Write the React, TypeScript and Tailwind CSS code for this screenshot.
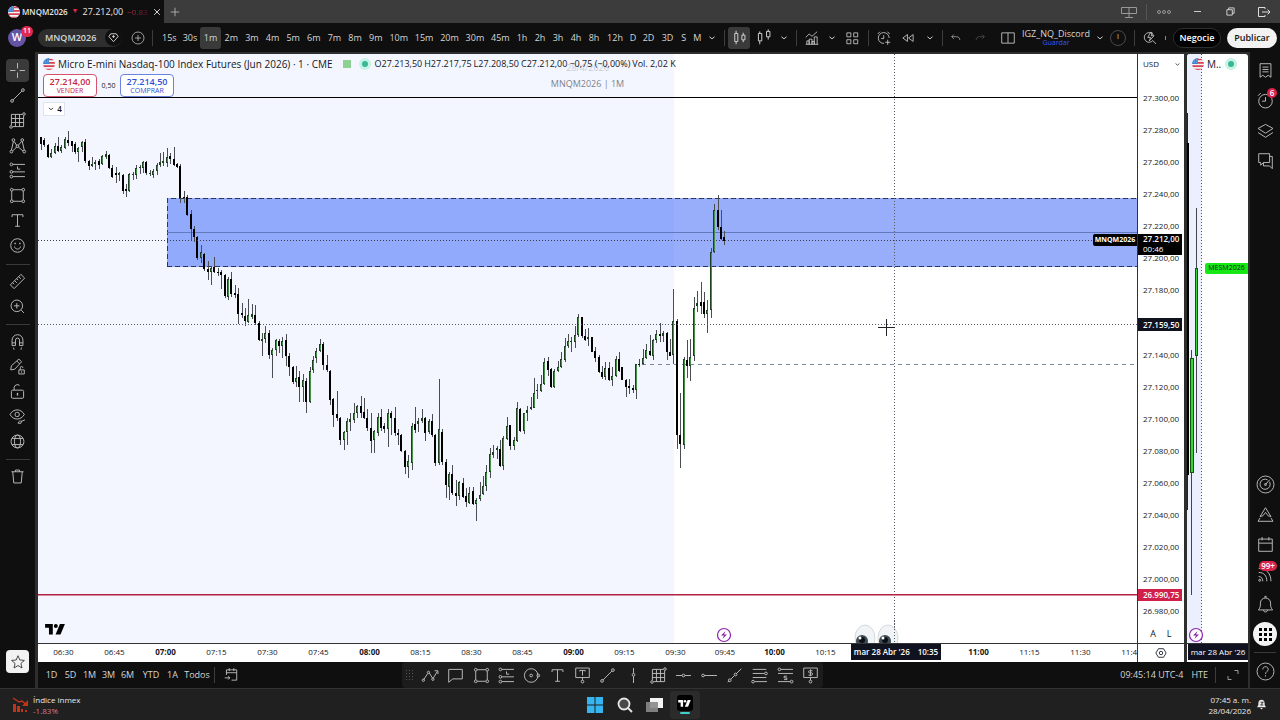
import { useState } from "react";
import type { ReactNode } from "react";

// [high, open, close, low] as y levels on the chart canvas, one bar per minute
type Bar = [number, number, number, number];

const FIRST_BAR_X = 41;
const BAR_STEP = 3.4;

const bars: Bar[] = [
  [137, 137, 144, 150], [138, 140, 145, 147], [144, 145, 157, 158], [149, 157, 153, 158],
  [143, 153, 146, 154], [137, 146, 151, 152], [145, 151, 147, 153], [137, 148, 139, 149],
  [131, 140, 143, 146], [141, 141, 146, 152], [142, 144, 152, 154], [147, 152, 148, 162],
  [141, 147, 142, 152], [139, 142, 161, 163], [160, 161, 166, 170], [157, 166, 164, 167],
  [160, 164, 162, 170], [159, 161, 165, 169], [155, 164, 156, 165], [151, 157, 154, 159],
  [154, 155, 168, 169], [165, 168, 177, 178], [167, 173, 175, 183], [172, 175, 173, 181],
  [174, 175, 191, 194], [184, 189, 191, 197], [173, 191, 174, 192], [172, 175, 174, 180],
  [165, 175, 168, 179], [165, 168, 167, 174], [161, 168, 162, 173], [161, 162, 173, 175],
  [170, 174, 173, 176], [169, 175, 171, 178], [163, 171, 165, 175], [153, 165, 162, 167],
  [152, 163, 161, 166], [148, 163, 157, 167], [153, 156, 159, 164], [147, 159, 165, 166],
  [163, 164, 167, 168], [164, 166, 198, 203], [191, 197, 198, 203], [195, 197, 215, 216],
  [210, 214, 229, 241], [226, 229, 237, 242], [236, 237, 258, 260], [245, 258, 252, 263],
  [253, 254, 269, 271], [261, 269, 272, 280], [266, 272, 268, 285], [257, 267, 272, 273],
  [268, 272, 273, 276], [270, 272, 275, 289], [274, 275, 296, 298], [277, 297, 279, 300],
  [272, 279, 294, 297], [285, 293, 295, 298], [288, 294, 314, 324], [303, 313, 315, 318],
  [308, 316, 321, 326], [299, 322, 315, 323], [304, 317, 314, 319], [305, 315, 323, 325],
  [321, 323, 340, 341], [333, 341, 339, 356], [326, 339, 333, 343], [330, 333, 355, 359],
  [348, 355, 350, 378], [339, 350, 340, 356], [339, 341, 346, 353], [337, 346, 341, 358],
  [334, 340, 356, 366], [353, 356, 367, 376], [366, 367, 382, 384], [366, 382, 378, 387],
  [371, 377, 387, 402], [374, 387, 380, 402], [378, 381, 402, 413], [367, 402, 371, 403],
  [356, 370, 360, 373], [348, 358, 351, 363], [339, 351, 344, 352], [342, 344, 365, 370],
  [355, 365, 370, 372], [370, 371, 400, 405], [398, 399, 415, 427], [391, 414, 418, 421],
  [417, 418, 440, 445], [431, 440, 432, 450], [418, 432, 421, 445], [413, 422, 419, 431],
  [403, 420, 413, 423], [405, 413, 406, 418], [396, 406, 413, 418], [398, 412, 418, 419],
  [409, 418, 428, 431], [413, 428, 441, 453], [430, 440, 431, 453], [413, 433, 417, 436],
  [409, 417, 428, 431], [423, 426, 429, 433], [409, 429, 413, 447], [411, 413, 418, 435],
  [407, 418, 433, 436], [429, 433, 435, 445], [434, 435, 451, 452], [450, 451, 467, 474],
  [455, 467, 461, 478], [423, 463, 426, 470], [407, 424, 430, 433], [418, 424, 421, 432],
  [409, 421, 418, 423], [417, 418, 433, 441], [419, 432, 421, 434], [414, 421, 435, 437],
  [434, 435, 463, 466], [379, 463, 429, 465], [429, 432, 462, 465], [459, 462, 485, 498],
  [472, 487, 474, 500], [465, 474, 493, 495], [480, 493, 496, 506], [481, 496, 482, 500],
  [478, 483, 497, 498], [488, 496, 502, 507], [487, 503, 493, 504], [487, 491, 504, 505],
  [498, 504, 500, 521], [482, 499, 495, 501], [476, 494, 486, 495], [465, 486, 472, 491],
  [448, 472, 454, 478], [445, 455, 452, 458], [446, 450, 448, 459], [440, 449, 466, 467],
  [436, 466, 438, 470], [417, 439, 426, 440], [425, 425, 446, 450], [437, 446, 440, 450],
  [402, 441, 408, 442], [408, 409, 431, 432], [413, 431, 413, 434], [406, 413, 410, 421],
  [397, 409, 407, 410], [378, 408, 393, 408], [384, 391, 390, 399], [375, 391, 384, 392],
  [358, 384, 362, 385], [357, 361, 370, 376], [368, 369, 387, 388], [369, 387, 371, 388],
  [361, 371, 367, 372], [352, 367, 359, 368], [338, 360, 346, 362], [334, 346, 341, 348],
  [337, 342, 341, 352], [326, 342, 335, 348], [314, 335, 317, 337], [317, 317, 336, 338],
  [329, 336, 340, 341], [328, 339, 337, 346], [337, 337, 352, 352], [347, 351, 358, 362],
  [355, 357, 372, 373], [366, 372, 377, 379], [362, 377, 368, 380], [362, 368, 380, 381],
  [367, 380, 376, 386], [356, 376, 359, 377], [352, 359, 371, 372], [367, 367, 380, 380],
  [379, 380, 387, 397], [379, 386, 388, 394], [385, 388, 390, 393], [364, 390, 364, 399],
  [359, 364, 365, 367], [349, 364, 358, 365], [344, 358, 350, 359], [335, 351, 355, 356],
  [339, 356, 340, 360], [330, 340, 334, 343], [323, 334, 336, 342], [331, 336, 333, 342],
  [332, 333, 352, 360], [339, 352, 356, 356], [289, 355, 321, 364], [319, 321, 435, 449],
  [393, 435, 444, 468], [357, 445, 359, 449], [340, 360, 366, 378], [339, 366, 357, 381],
  [297, 356, 308, 361], [291, 306, 303, 312], [282, 302, 306, 314], [292, 302, 314, 318],
  [300, 314, 310, 333], [248, 310, 252, 318], [204, 252, 210, 253], [195, 210, 227, 230],
  [210, 227, 239, 240], [231, 237, 241, 245],
];

// the empty row is the one that the crosshair price covers
const prices = [
  "27.300,00", "27.280,00", "27.260,00", "27.240,00", "27.220,00", "27.200,00",
  "27.180,00", "", "27.140,00", "27.120,00", "27.100,00", "27.080,00",
  "27.060,00", "27.040,00", "27.020,00", "27.000,00", "26.980,00",
];

const timesBefore = [
  "06:30", "06:45", "07:00", "07:15", "07:30", "07:45", "08:00", "08:15", "08:30",
  "08:45", "09:00", "09:15", "09:30", "09:45", "10:00", "10:15",
];
const timesAfter = ["11:00", "11:15", "11:30", "11:45"];

const intervalGroups = [
  { width: "w-[227px]", items: ["15s", "30s", "1m", "2m", "3m", "4m", "5m", "6m", "7m", "8m", "9m"] },
  { width: "w-[127px]", items: ["10m", "15m", "20m", "30m", "45m"] },
  { width: "w-[90px]", items: ["1h", "2h", "3h", "4h", "8h"] },
  { width: "w-6", items: ["12h"] },
  { width: "w-3", items: ["D"] },
  { width: "w-[38px]", items: ["2D", "3D"] },
  { width: "w-[27px]", items: ["S", "M"] },
];

const ranges = [
  { label: "1D", width: "w-[19px]" },
  { label: "5D", width: "w-[19px]" },
  { label: "1M", width: "w-[19px]" },
  { label: "3M", width: "w-[19px]" },
  { label: "6M", width: "w-[19px]" },
  { label: "YTD", width: "w-7" },
  { label: "1A", width: "w-[15px]" },
  { label: "Todos", width: "w-[34px]" },
];

const Icon = ({ children, className = "size-[19px]" }: { children: ReactNode; className?: string }) => (
  <svg
    viewBox="0 0 28 28"
    className={`shrink-0 ${className}`}
    fill="none"
    stroke="currentColor"
    strokeWidth="1.4"
    aria-hidden="true"
  >
    {children}
  </svg>
);

const icons = {
  cross: <path d="M14 3v8M14 17v8M3 14h8M17 14h8" />,
  trend: (
    <>
      <path d="M7.5 20.5l13-13" />
      <circle cx="6" cy="22" r="2" />
      <circle cx="22" cy="6" r="2" />
    </>
  ),
  gann: (
    <>
      <path d="M5 5h16M5 5v16M7 23h16V7M11 5v18M17 5v18M5 11h18M5 17h18" />
      <circle cx="23.500" cy="4.500" r="1.900" />
      <circle cx="4.500" cy="23.500" r="1.900" />
    </>
  ),
  pattern: (
    <>
      <path d="M5 21L8 8M9 8l4 6M15 14l5-6M21 8l3 13M7 22l6-6M15 16l7 6" />
      <circle cx="8" cy="6" r="2" />
      <circle cx="21" cy="6" r="2" />
      <circle cx="14" cy="15" r="2" />
      <circle cx="5" cy="23" r="2" />
      <circle cx="24" cy="23" r="2" />
    </>
  ),
  position: (
    <>
      <path d="M7 5h18M7 16h18M7 23h18M14 8v4h4" />
      <circle cx="5" cy="5" r="2" />
      <circle cx="5" cy="16" r="2" />
      <circle cx="5" cy="23" r="2" />
    </>
  ),
  priceRange: (
    <>
      <path d="M7 5h18M3 11h22M3 23h18M16 15h-4v2.500h4V20h-4" />
      <circle cx="5" cy="5" r="2" />
      <circle cx="23" cy="23" r="2" />
    </>
  ),
  rect: (
    <>
      <path d="M7.500 5.500h13M7.500 22.500h13M5.500 7.500v13M22.500 7.500v13" />
      <circle cx="5.500" cy="5.500" r="2" />
      <circle cx="22.500" cy="5.500" r="2" />
      <circle cx="5.500" cy="22.500" r="2" />
      <circle cx="22.500" cy="22.500" r="2" />
    </>
  ),
  text: <path d="M6 9V5.500h16V9M14 5.500v17M10.500 22.500h7" />,
  smile: (
    <>
      <circle cx="14" cy="14" r="10" />
      <path d="M9.500 15.500c1 5 8 5 9 0" />
      <path d="M10.500 10v2M17.500 10v2" strokeWidth="2" />
    </>
  ),
  ruler: <path d="M3.500 19L19 3.500l5.500 5.500L9 24.500zM7 16l2 2M10 13l3 3M13 10l2 2M16 7l3 3" />,
  zoom: (
    <>
      <circle cx="13" cy="13" r="8.500" />
      <path d="M19.500 19.500l4 4M13 9v8M9 13h8" />
    </>
  ),
  magnet: <path d="M6 20v-8a8 8 0 0116 0v8h-5v-8a3 3 0 00-6 0v8zM6 16h5M17 16h5M8 23l1 3M20 23l-1 3" />,
  pencilLock: (
    <>
      <path d="M4 19l1-6L16 3l4 4L10 18zM13 6l4 4M16 19h8v6h-8zM18 19v-3a2 2 0 014 0" />
      <path d="M20 21v2" />
    </>
  ),
  lock: (
    <>
      <rect x="5" y="12" width="18" height="12" rx="2" />
      <path d="M9 12V8a5 5 0 018-3" />
      <path d="M14 16v4" strokeWidth="2" />
    </>
  ),
  eye: (
    <>
      <path d="M3 11c5-9 16-9 21 0-5 9-16 9-21 0z" />
      <rect x="10.500" y="8" width="6" height="6" rx="2" />
      <path d="M15 24c0-3 3-4 5-3l-1 3zM20 21l5-2" />
    </>
  ),
  globe: (
    <>
      <circle cx="14" cy="14" r="9.500" />
      <ellipse cx="14" cy="14" rx="4.500" ry="9.500" />
      <path d="M6 9.500h16M6 18.500h16" />
    </>
  ),
  trash: <path d="M5 7h18M11 7V4.500h6V7M7 7l1.500 16.500h11L21 7" />,
  star: <path d="M14 3l3.200 7.500 8 .700-6.100 5.300 1.900 8-7-4.300-7 4.300 1.900-8-6.100-5.300 8-.700z" />,
  candles: <path d="M9 4v4M9 20v4M7 8h4.500v12H7zM19.500 7v3.500M19.500 17.500V21M17.500 10.500H22v7h-4.500z" />,
  candlesAlt: <path d="M7 5v3M7 19v5M5 8h5v11H5zM19.500 2v3M19.500 13v4M17 5h5v8h-5z" />,
  indicators: <path d="M3 13l6-6 5 4 9-8M5 25v-6h4v6M9 25v-9h5v9M14 25v-5h4v5M18 25V12h5v13M3 25h22" />,
  layouts: <path d="M5 5h7v7H5zM17 5h7v7h-7zM5 17h7v7H5zM17 17h7v7h-7z" />,
  alertAdd: <path d="M23 14a9.500 9.500 0 10-9 9.500M13.500 9v6H9M3 7l4-4M20 3l4 4M20.500 17v9M16 21.500h9" />,
  rewind: <path d="M13 8v12l-8-6zM23 8v12l-8-6z" />,
  undo: <path d="M9 6l-5 5 5 5M4 11h11c5 0 8 3 8 8" />,
  redo: <path d="M19 6l5 5-5 5M24 11H13c-5 0-8 3-8 8" />,
  layout: <path d="M3 5h22v18H3zM14 5v18" />,
  chevron: <path d="M8 11l6 5 6-5" strokeWidth="2.200" />,
  flashSearch: <path d="M20 9a8.500 8.500 0 10-1 9.500l5.500 6M15 4l-5 9h5l-2 6 8-9h-5l2-5z" />,
  list: <path d="M6 4h16v20l-4-3-4 3-4-3-4 3zM9.500 9h9M9.500 12.500h9M9.500 16h9" />,
  clock: (
    <>
      <circle cx="14" cy="15" r="10" />
      <path d="M14 9v6h-5M3 7l4-4" />
    </>
  ),
  layers: <path d="M14 5l11 6-11 7-11-7zM3 17l11 7 11-7" />,
  chat: <path d="M4 4h16v13H11l-4 4v-4H4zM20 8h4v18l-4-4h-9v-5" />,
  radar: (
    <>
      <circle cx="14" cy="14" r="12.500" />
      <path d="M20 10a7.500 7.500 0 11-3-3M14 14l6-7" />
      <circle cx="14" cy="14" r="1.500" />
    </>
  ),
  pine: <path d="M6 19l-3 5h22l-3-5M6 17l8-13 8 13-4-1-4-5-4 5z" />,
  calendar: <path d="M4 6h20v18H4zM4 12h20M9 3v5M19 3v5" />,
  feed: (
    <>
      <path d="M4 11c8 0 12 5 12 13M4 5c12 0 18 8 18 19M4 17c4 0 6 3 6 7" />
      <circle cx="5.500" cy="22.500" r="1.500" />
    </>
  ),
  bell: <path d="M3.500 22h21c-3-3-3-6-3-10 0-10-15-10-15 0 0 4 0 7-3 10zM11 22c0 4 6 4 6 0M13 4V2h2v2" />,
  help: (
    <>
      <circle cx="14" cy="14" r="12.500" />
      <path d="M10 11c0-5.500 8-5.500 8 0 0 3-4 3-4 6.500M14 19.500v2" />
    </>
  ),
  goTo: <path d="M6 14V5h18v18h-9M6 10h18M11 2v5M19 2v5M3 19h9M9 16l3 3-3 3" />,
  path: (
    <>
      <path d="M4 20l6-9M12 10l5 8M18 18l6-10M20 7h5v5" />
      <circle cx="3.500" cy="21" r="1.700" />
      <circle cx="11" cy="9.500" r="1.700" />
      <circle cx="17.500" cy="19.500" r="1.700" />
    </>
  ),
  comment: <path d="M4 5h20v14H10l-6 5z" />,
  ellipse: (
    <>
      <circle cx="13.500" cy="14" r="10" />
      <circle cx="13.500" cy="14" r="2" />
      <circle cx="24" cy="14" r="2" />
    </>
  ),
  note: (
    <>
      <path d="M4 3h20v14H4zM10 8V6.500h8V8M14 6.500V14M14 17v4" />
      <circle cx="14" cy="23" r="2" />
    </>
  ),
  vertical: (
    <>
      <path d="M14 3v8M14 15v10" />
      <circle cx="14" cy="13" r="2" />
    </>
  ),
  horizontal: (
    <>
      <path d="M3 14h9M16 14h9" />
      <circle cx="14" cy="14" r="2" />
    </>
  ),
  ray: (
    <>
      <path d="M6 14h19" />
      <circle cx="4.500" cy="14" r="2" />
    </>
  ),
  extended: (
    <>
      <path d="M4 24l2-2M9 19l5-5M16 12l8-8" />
      <circle cx="7" cy="21" r="2" />
      <circle cx="15.500" cy="12.500" r="2" />
    </>
  ),
  fib: (
    <>
      <path d="M4 5h20M4 11h17M4 17h20M7 23h18" />
      <circle cx="23.500" cy="11" r="2" />
      <circle cx="4.500" cy="23" r="2" />
    </>
  ),
  priceNote: (
    <>
      <path d="M4 3h20v14H4zM17 7h-4.500c-2 0-2 3 0 3h3c2 0 2 3.500 0 3.500H11M14 5v10M14 17v4" />
      <circle cx="14" cy="23" r="2" />
    </>
  ),
  expand: <path d="M17 5h7v7M4 16v7h7" />,
  close: <path d="M6 6l16 16M22 6L6 22" strokeWidth="2.600" />,
  plus: <path d="M14 4v20M4 14h20" strokeWidth="2" />,
};

type IconName = keyof typeof icons;

const drawTools: IconName[][] = [
  ["cross", "trend", "gann", "pattern", "position", "rect", "text", "smile"],
  ["ruler", "zoom"],
  ["magnet", "pencilLock", "lock", "eye", "globe"],
];

const favoriteTools: IconName[] = [
  "path", "comment", "rect", "position", "ellipse", "text", "note", "trend", "vertical",
  "gann", "horizontal", "ray", "extended", "fib", "priceRange", "priceNote",
];

const IconButton = ({ name, width, size }: { name: IconName; width: string; size?: string }) => (
  <button type="button" aria-label={name} className={`flex h-full items-center justify-center ${width}`}>
    <Icon className={size}>{icons[name]}</Icon>
  </button>
);

const Divider = ({ width }: { width: string }) => (
  <div className={`flex justify-center ${width}`}>
    <div className="h-4 w-px bg-[#3d3d3d]" />
  </div>
);

const Flag = () => (
  <svg viewBox="0 0 18 18" className="size-3 shrink-0" aria-hidden="true">
    <clipPath id="round">
      <circle cx="9" cy="9" r="9" />
    </clipPath>
    <g clipPath="url(#round)">
      <path fill="#f1f3f8" d="M0 0h18v18H0z" />
      <path fill="#d9404f" d="M9 1h9v2.500H9zM9 6h9v2.500H9zM0 11h18v2.500H0zM0 16h18v2H0z" />
      <path fill="#3d84cf" d="M0 0h9v9H0z" />
      <path stroke="#cfe3f7" strokeDasharray="1 1.500" d="M1 3h8M1 6h8" />
    </g>
  </svg>
);

const TvLogo = ({ className }: { className: string }) => (
  <svg viewBox="0 0 36 20" className={className} fill="currentColor" aria-hidden="true">
    <path d="M0 0h14v19H7V7H0z" />
    <circle cx="19.500" cy="3.800" r="3.600" />
    <path d="M27 0h9l-8 19h-9z" />
  </svg>
);

const LiveDot = () => (
  <span className="flex size-3 shrink-0 items-center justify-center rounded-full bg-[#c5f3e6]">
    <span className="size-[6px] rounded-full bg-[#3bb795]" />
  </span>
);

const Flash = ({ x, y }: { x: number; y: number }) => (
  <g>
    <circle cx={x} cy={y} r="6.500" fill="#fff" stroke="#8e24aa" strokeWidth="1.200" />
    <path d={`M${x + 1.5} ${y - 4}l-4.500 4.500h3l-1.500 3.500 4.500-4.500h-3z`} fill="#8e24aa" />
  </g>
);

const TitleBar = () => (
  <div className="flex h-[23px] shrink-0 bg-[#3c3c3c] text-[#b8b8b8]">
    <div className="flex w-[164px] items-center gap-1 bg-[#0f0f0f] pl-2 text-[9px] text-[#e6e6e6]">
      <Flag />
      <span className="-ml-[2px] text-[8px] font-semibold">MNQM2026</span>
      <span className="text-[7px] text-[#e0294f]">▼</span>
      <span>27.212,00</span>
      <span className="bg-linear-to-r from-[#d02a4c] to-[#5a1624] bg-clip-text text-[8px] text-transparent">−0.83</span>
      <button type="button" aria-label="Cerrar pestaña" className="mr-1 ml-auto">
        <Icon className="size-[10px]">{icons.close}</Icon>
      </button>
    </div>
    <button type="button" aria-label="Nueva pestaña" className="px-[5px]">
      <Icon className="size-3">{icons.plus}</Icon>
    </button>
    <div className="ml-auto flex items-center">
      <svg viewBox="0 0 16 12" className="mr-[9px] h-3 w-4" fill="none" stroke="#999" aria-hidden="true">
        <path d="M.500 1.500h15v6H.500zM8 1.500v10M4 11.500h8" />
      </svg>
      <div className="h-4 w-px bg-[#555]" />
      <svg viewBox="0 0 16 6" className="mx-[9px] h-[6px] w-4" fill="none" stroke="#999" aria-hidden="true">
        <circle cx="3" cy="3" r="1.500" />
        <circle cx="8" cy="3" r="1.500" />
        <circle cx="13" cy="3" r="1.500" />
      </svg>
      <button type="button" aria-label="Minimizar" className="flex w-[33px] justify-center">
        <span className="h-px w-[7px] bg-[#ccc]" />
      </button>
      <button type="button" aria-label="Restaurar" className="flex w-[33px] justify-center">
        <svg viewBox="0 0 10 10" className="size-[9px]" fill="none" stroke="#ddd" aria-hidden="true">
          <path d="M1 3h6v6H1zM3 3V1h6v6H7" />
        </svg>
      </button>
      <button type="button" aria-label="Salir" className="flex w-[33px] justify-center">
        <svg viewBox="0 0 14 12" className="h-3 w-[14px]" fill="none" stroke="#ddd" aria-hidden="true">
          <path d="M8 3V1.500H1.500v9H8V9M5 6h8M10.500 3.500L13 6l-2.500 2.500" />
        </svg>
      </button>
    </div>
  </div>
);

const TopToolbar = () => {
  const [interval, setActive] = useState("1m");

  return (
    <div className="flex h-[29px] shrink-0 items-center bg-[#0f0f0f] text-[9px] font-medium">
      <div className="relative ml-2 flex size-[18px] shrink-0 items-center justify-center rounded-full bg-[#6554a4] text-[11px] font-semibold text-white">
        W
        <span className="absolute -top-[3px] left-[13px] flex h-[11px] w-3 items-center justify-center rounded-full bg-[#e0294f] text-[7px]">
          11
        </span>
      </div>
      <button
        type="button"
        className="ml-3 flex h-[18px] w-[84px] shrink-0 items-center justify-between rounded-full bg-[#2e2e2e] pl-[7px] font-semibold"
      >
        MNQM2026
        <span className="flex size-[17px] items-center justify-center rounded-full bg-[#0f0f0f]">
          <Icon className="size-[13px]">
            <path d="M8 6h12l4 6-10 11L4 12zM11 12h6M14 9v6" strokeWidth="2" />
          </Icon>
        </span>
      </button>
      <button type="button" aria-label="Comparar" className="ml-[9px] flex w-[14px] justify-center">
        <Icon className="size-[14px]">
          <circle cx="14" cy="14" r="12" />
          <path d="M14 8v12M8 14h12" />
        </Icon>
      </button>
      <Divider width="w-[14px]" />
      {intervalGroups.map((group) => (
        <div key={group.items[0]} className={`flex shrink-0 ${group.width}`}>
          {group.items.map((item) => (
            <button
              key={item}
              type="button"
              onClick={() => setActive(item)}
              className={`h-[22px] flex-1 basis-0 rounded-[3px] ${item === interval ? "bg-[#3a3a3a]" : ""}`}
            >
              {item}
            </button>
          ))}
        </div>
      ))}
      <IconButton name="chevron" width="w-4" size="size-3" />
      <Divider width="w-2" />
      <button
        type="button"
        aria-label="Velas"
        className="flex h-[22px] w-[22px] items-center justify-center rounded-[3px] bg-[#3a3a3a]"
      >
        <Icon>{icons.candles}</Icon>
      </button>
      <IconButton name="candlesAlt" width="w-7" />
      <IconButton name="chevron" width="w-3" size="size-3" />
      <Divider width="w-3" />
      <IconButton name="indicators" width="w-5" size="size-4" />
      <IconButton name="chevron" width="w-5" size="size-3" />
      <IconButton name="layouts" width="w-5" size="size-4" />
      <Divider width="w-3" />
      <IconButton name="alertAdd" width="w-5" size="size-4" />
      <IconButton name="rewind" width="w-7" size="size-4" />
      <IconButton name="chevron" width="w-4" size="size-3" />
      <Divider width="w-2" />
      <IconButton name="undo" width="w-5" size="size-3" />
      <div className="flex h-full text-[#666]">
        <IconButton name="redo" width="w-7" size="size-3" />
      </div>
      <div className="ml-auto flex h-full items-center">
        <IconButton name="layout" width="w-7" size="size-4" />
        <div className="flex w-[68px] flex-col items-center leading-[10px]">
          <span>IGZ_NQ_Discord</span>
          <span className="text-[7px] leading-[7px] text-[#3557f0]">Guardar</span>
        </div>
        <IconButton name="chevron" width="w-5" size="size-3" />
        <div className="flex size-4 items-center justify-center rounded-full border border-[#4a4a4a] text-[7px]">I</div>
        <Divider width="w-4" />
        <IconButton name="flashSearch" width="w-4" size="size-4" />
        <div className="flex w-[15px] justify-center">
          <span className="h-1 w-px bg-[#888]" />
        </div>
        <button type="button" className="h-5 w-12 rounded-full border border-[#2e2e2e] bg-black font-semibold text-white">
          Negocie
        </button>
        <button type="button" className="mr-[3px] ml-[6px] h-5 w-[50px] rounded-full bg-[#f2f2f2] font-semibold text-[#111]">
          Publicar
        </button>
      </div>
    </div>
  );
};

const LeftToolbar = () => (
  <div className="flex w-[35px] shrink-0 flex-col items-center bg-[#0f0f0f] pt-[7px] text-[#bdbdbd]">
    {drawTools.map((group, i) => (
      <div key={group[0]} className="flex w-full flex-col items-center">
        {group.map((name) => (
          <button
            key={name}
            type="button"
            aria-label={name}
            className={`mb-[2px] flex h-[23px] w-[23px] items-center justify-center rounded-[4px] ${name === "cross" ? "bg-[#3a3a3a]" : ""}`}
          >
            <Icon>{icons[name]}</Icon>
          </button>
        ))}
        <div className={`mb-[5px] h-px w-6 bg-[#3a3a3a] ${i === 0 ? "mt-[5px]" : "mt-1"}`} />
      </div>
    ))}
    <button type="button" aria-label="Eliminar" className="flex h-[23px] items-center">
      <Icon>{icons.trash}</Icon>
    </button>
    <button
      type="button"
      aria-label="Favoritos"
      className="mt-auto mb-[15px] flex size-[23px] items-center justify-center rounded-[4px] bg-[#f2f2f2] text-[#222]"
    >
      <Icon className="size-4">{icons.star}</Icon>
    </button>
  </div>
);

const Candles = () => (
  <g shapeRendering="crispEdges">
    {bars.map(([high, open, close, low], i) => {
      const x = Math.round(FIRST_BAR_X + i * BAR_STEP);
      const up = close < open;
      const top = Math.min(open, close);
      const height = Math.max(Math.abs(open - close), 1);
      return (
        <g key={i}>
          <rect x={x} y={high} width="1" height={low - high} fill="#4a4d52" />
          <rect x={x - 1} y={top} width="2" height={height} fill={up ? "#1c3f1c" : "#000"} />
          {up && height > 3 && <rect x={x} y={top + 1} width="1" height={height - 2} fill="#48904a" />}
        </g>
      );
    })}
  </g>
);

const Eye = ({ x }: { x: number }) => (
  <g>
    <ellipse cx={x} cy="638" rx="10" ry="13" fill="#f1f4f6" stroke="#d5dade" />
    <circle cx={x - 3} cy="641" r="6" fill="#3c4a55" />
    <circle cx={x - 3} cy="640" r="3" fill="#0b0f12" />
    <circle cx={x - 5} cy="638" r="1.500" fill="#fff" />
  </g>
);

const PriceChart = () => (
  <svg className="absolute inset-0 h-full w-full" role="img" aria-label="MNQM2026, velas de 1 minuto">
    {/* canvas coordinates start at the top left of the window */}
    <g transform="translate(-38 -54)">
      <rect x="38" y="54" width="636" height="590" fill="#f3f6ff" />
      <rect x="167" y="198" width="2000" height="69" fill="#3d66f7" fillOpacity="0.530" />
      <g shapeRendering="crispEdges" fill="none">
        <path d="M167.500 267V198.500H2000M167 266.500H2000" stroke="#2b3358" strokeDasharray="5 3" />
        <path d="M167 232.500H2000" stroke="#6379bd" />
        <path d="M38 97.500H2000" stroke="#000" strokeWidth="1.500" />
        <path d="M642 364.500H2000" stroke="#7c88a6" strokeDasharray="4 4" />
      </g>
      <Candles />
      <g shapeRendering="crispEdges" fill="none">
        <path d="M38 240.500H2000" stroke="#3b3f4f" strokeDasharray="1 2" />
        <path d="M38 324.500H2000M894.500 54V644" stroke="#555a66" strokeDasharray="1 2" />
      </g>
      <path d="M38 594.700H2000" stroke="#b2213f" strokeWidth="1.500" />
      <Flash x={724} y={635} />
      <Eye x={865} />
      <Eye x={888} />
      <path d="M894.500 620V644" stroke="#555a66" strokeDasharray="1 2" />
      <path d="M878 327.500h17M886.500 319v17" stroke="#222" />
    </g>
  </svg>
);

const TimeLabel = ({ time }: { time: string }) => (
  <span
    className={`shrink-0 text-center ${time === "09:45" ? "w-12" : "w-[51px]"} ${time.endsWith(":00") ? "font-bold" : "font-medium"}`}
  >
    {time}
  </span>
);

const MainChart = () => (
  <div className="flex min-w-0 flex-1 flex-col bg-white text-[#131722]">
    <div className="relative flex-1 overflow-hidden">
      <PriceChart />
      <div className="absolute top-[6px] flex w-full flex-col items-center text-[9px] leading-4 text-[#7e828c]">
        <span className="text-[#c9ccd4]">28/4/2026</span>
        <span>MNQM2026 | 1M</span>
      </div>
      <div className="relative flex h-5 items-center pl-[5px] whitespace-nowrap">
        <Flag />
        <h1 className="mr-[10px] ml-[3px] text-[10px] font-medium">
          Micro E-mini Nasdaq-100 Index Futures (Jun 2026) · 1 · CME
        </h1>
        <span className="mr-2 h-2 w-2 bg-[#8ed193]" />
        <LiveDot />
        <div className="ml-1 flex gap-[2px] text-[9px]">
          <span>O27.213,50</span>
          <span>H27.217,75</span>
          <span>L27.208,50</span>
          <span>C27.212,00</span>
          <span>−0,75 (−0,00%)</span>
          <span>Vol. 2,02 K</span>
        </div>
      </div>
      <div className="relative flex items-center pl-[5px] text-[9px] leading-[9px]">
        <button type="button" className="h-[23px] w-[54px] rounded-[4px] border border-[#d4536d] bg-white text-[#c72544]">
          <span className="block font-semibold">27.214,00</span>
          <span className="block text-[7px]">VENDER</span>
        </button>
        <span className="w-[23px] text-center text-[7px]">0,50</span>
        <button type="button" className="h-[23px] w-[54px] rounded-[4px] border border-[#6a83e0] bg-white text-[#2c4fd8]">
          <span className="block font-semibold">27.214,50</span>
          <span className="block text-[7px]">COMPRAR</span>
        </button>
      </div>
      <button
        type="button"
        className="relative mt-[5px] ml-[5px] flex h-[14px] w-[22px] items-center justify-center gap-px border border-[#e0e3eb] bg-white text-[8px] font-semibold"
      >
        <Icon className="size-[10px]">{icons.chevron}</Icon>4
      </button>
      <TvLogo className="absolute bottom-2 left-[7px] h-[11px] w-5 text-black" />
      <span className="absolute top-[180px] right-0 flex h-3 w-[44px] items-center justify-center rounded-l-[2px] bg-black text-[7px] font-bold text-white">
        MNQM2026
      </span>
    </div>
    <div className="flex h-[19px] shrink-0 items-start overflow-hidden border-t border-[#333] text-[8px] leading-[16px]">
      {timesBefore.map((time) => (
        <TimeLabel key={time} time={time} />
      ))}
      {/* crosshair time, drawn over the 10:30 and 10:45 slots */}
      <div className="flex w-[102px] shrink-0">
        <div className="flex h-[16px] w-[90px] items-center justify-center gap-2 bg-[#10131f] font-semibold whitespace-nowrap text-white">
          <span>mar 28 Abr '26</span>
          <span>10:35</span>
        </div>
      </div>
      {timesAfter.map((time) => (
        <TimeLabel key={time} time={time} />
      ))}
    </div>
  </div>
);

const PriceScale = () => (
  <div className="flex w-[47px] shrink-0 flex-col border-l border-[#333] bg-white text-[8px] font-medium text-[#131722]">
    <div className="relative flex-1">
      <div className="flex h-5 items-center">
        <select
          aria-label="Moneda"
          className="ml-[5px] h-4 w-[30px] appearance-none text-[8px] leading-4 outline-none"
          defaultValue="USD"
        >
          <option>USD</option>
        </select>
        <Icon className="size-[9px]">{icons.chevron}</Icon>
      </div>
      <div className="mt-2 flex h-[545px] flex-col pl-[5px]">
        {prices.map((price, i) => (
          <span key={i} className="flex flex-1 items-center">
            {price}
          </span>
        ))}
      </div>
      <div className="absolute bottom-1 flex w-full justify-center gap-1 text-[9px] leading-[11px]">
        <button type="button" className="w-3">A</button>
        <button type="button" className="w-3">L</button>
      </div>
      <div className="absolute top-[180px] left-0 flex h-[21px] w-11 flex-col bg-black pl-[5px] leading-[10px] text-white">
        <span className="font-semibold">27.212,00</span>
        <span>00:46</span>
      </div>
      <span className="absolute top-[264px] left-0 flex h-[13px] w-11 items-center bg-[#10131f] pl-[5px] font-semibold text-white">
        27.159,50
      </span>
      <span className="absolute top-[535px] left-0 flex h-3 w-11 items-center bg-[#d0204a] pl-[5px] font-semibold text-white">
        26.990,75
      </span>
    </div>
    <button
      type="button"
      aria-label="Ajustes"
      className="flex h-[19px] w-full items-center justify-center border-t border-[#333]"
    >
      <Icon className="size-3">
        <path d="M8 4h12l6 10-6 10H8L2 14z" strokeWidth="2" />
        <circle cx="14" cy="14" r="4" strokeWidth="2" />
      </Icon>
    </button>
  </div>
);

const SideChart = () => (
  <div className="flex w-[61px] shrink-0 flex-col overflow-hidden rounded-t-[3px] bg-white text-[#131722]">
    <div className="relative flex-1">
      <svg className="absolute inset-0 h-full w-full" role="img" aria-label="MESM2026">
        <g transform="translate(-1187 -54)" shapeRendering="crispEdges">
          <rect x="1187" y="54" width="15" height="590" fill="#eceffd" />
          <rect x="1187" y="113" width="1" height="397" fill="#222" />
          <rect x="1187" y="143" width="2" height="332" fill="#000" />
          <rect x="1191" y="350" width="1" height="245" fill="#444" />
          <rect x="1190" y="358" width="4" height="115" fill="#115511" />
          <rect x="1191" y="359" width="2" height="113" fill="#35d535" />
          <rect x="1196" y="208" width="1" height="245" fill="#444" />
          <rect x="1195" y="268" width="3" height="88" fill="#115511" />
          <rect x="1196" y="269" width="1" height="86" fill="#35d535" />
          <path d="M1201.500 54V644" stroke="#555a66" strokeDasharray="1 2" />
        </g>
        <g transform="translate(-1187 -54)">
          <Flash x={1196} y={635} />
        </g>
      </svg>
      <div className="relative flex h-5 items-center pl-[5px] text-[10px] font-medium">
        <Flag />
        <span className="ml-[3px] w-[18px]">M..</span>
        <LiveDot />
      </div>
      <span className="absolute top-[209px] right-0 flex h-[11px] w-[43px] items-center justify-center rounded-l-[2px] bg-[#15e815] text-[7px] font-medium">
        MESM2026
      </span>
    </div>
    <div className="flex h-[19px] items-start border-t border-[#333]">
      <span className="ml-px flex h-[16px] flex-1 items-center justify-center bg-[#10131f] text-[8px] font-medium whitespace-nowrap text-white">
        mar 28 Abr '26
      </span>
    </div>
  </div>
);

const BottomBar = () => (
  <div className="flex h-[26px] shrink-0 items-center bg-[#0f0f0f] text-[9px] font-medium">
    <div className="flex h-full w-[364px] items-center pl-1">
      {ranges.map(({ label, width }) => (
        <button key={label} type="button" className={width}>
          {label}
        </button>
      ))}
      <Divider width="w-px" />
      <IconButton name="goTo" width="w-8" size="size-4" />
    </div>
    <div className="flex h-full items-center rounded-[4px] bg-[#1c1c1c] text-[#bdbdbd]">
      <svg viewBox="0 0 8 12" className="ml-1 h-3 w-2" fill="#555" aria-hidden="true">
        <path d="M0 1h1v1H0zM3 1h1v1H3zM6 1h1v1H6zM0 4h1v1H0zM3 4h1v1H3zM6 4h1v1H6zM0 7h1v1H0zM3 7h1v1H3zM6 7h1v1H6zM0 10h1v1H0zM3 10h1v1H3zM6 10h1v1H6z" />
      </svg>
      <div className="ml-1 flex h-full w-[405px]">
        {favoriteTools.map((name) => (
          <IconButton key={name} name={name} width="flex-1" />
        ))}
      </div>
    </div>
    <div className="ml-auto flex h-full items-center">
      <button type="button" className="mr-2">09:45:14 UTC-4</button>
      <button type="button">HTE</button>
      <Divider width="w-[15px]" />
      <div className="mr-[5px] flex h-full">
        <IconButton name="expand" width="w-5" size="size-[14px]" />
      </div>
    </div>
  </div>
);

const Badge = ({ children, className }: { children: ReactNode; className: string }) => (
  <span
    className={`absolute flex h-[10px] items-center justify-center rounded-full bg-[#d9234b] text-[8px] font-semibold text-white ${className}`}
  >
    {children}
  </span>
);

const RightSidebar = () => {
  const top: IconName[] = ["list", "clock", "layers", "chat"];
  const bottom: IconName[] = ["radar", "pine", "calendar", "feed", "bell"];

  return (
    <div className="flex w-[30px] shrink-0 flex-col items-center bg-[#0f0f0f] pt-[3px] pb-[2px] text-[#bdbdbd]">
      {top.map((name) => (
        <button key={name} type="button" aria-label={name} className="relative flex h-[30px] w-full items-center justify-center">
          <Icon>{icons[name]}</Icon>
          {name === "clock" && <Badge className="top-[3px] right-[3px] w-[10px]">6</Badge>}
        </button>
      ))}
      <div className="mt-auto w-full">
        {bottom.map((name) => (
          <button key={name} type="button" aria-label={name} className="relative flex h-[30px] w-full items-center justify-center">
            <Icon>{icons[name]}</Icon>
            {name === "feed" && <Badge className="top-[2px] right-[3px] w-[18px]">99+</Badge>}
          </button>
        ))}
      </div>
      <button type="button" aria-label="Productos" className="my-[3px] flex size-6 items-center justify-center rounded-full bg-[#f2f2f2] text-black">
        <svg viewBox="0 0 13 13" className="size-[13px]" fill="currentColor" aria-hidden="true">
          <path d="M0 0h3v3H0zM5 0h3v3H5zM10 0h3v3h-3zM0 5h3v3H0zM5 5h3v3H5zM10 5h3v3h-3zM0 10h3v3H0zM5 10h3v3H5zM10 10h3v3h-3z" />
        </svg>
      </button>
      <div className="my-[3px] h-px w-[22px] bg-[#3a3a3a]" />
      <button type="button" aria-label="Ayuda" className="flex h-[30px] items-center">
        <Icon>{icons.help}</Icon>
      </button>
    </div>
  );
};

const Taskbar = () => (
  <div className="grid h-8 shrink-0 grid-cols-3 items-center border-t border-[#333] bg-[#202020] text-[8px] leading-[11px] text-[#e8e8e8]">
    <div className="flex items-center gap-1 pl-3">
      <svg viewBox="0 0 17 17" className="size-[17px]" fill="#c2331c" aria-hidden="true">
        <path d="M1 8h3v8H1zM5 10h3v6H5zM9 13h2v3H9zM13 14h2v2h-2z" />
        <path d="M1 2l6 4 3-1 5 4" fill="none" stroke="#c2331c" strokeWidth="1.500" />
        <path d="M16 4v6h-6z" />
      </svg>
      <div>
        <div>Índice inmex</div>
        <div className="text-[#d77a93]">-1.83%</div>
      </div>
    </div>
    <div className="flex justify-center">
      <button type="button" aria-label="Inicio" className="flex h-7 w-[30px] items-center justify-center">
        <svg viewBox="0 0 16 16" className="size-4" fill="#35b6f1" aria-hidden="true">
          <path d="M0 0h7.500v7.500H0zM8.500 0H16v7.500H8.500zM0 8.500h7.500V16H0zM8.500 8.500H16V16H8.500z" />
        </svg>
      </button>
      <button type="button" aria-label="Buscar" className="flex h-7 w-[30px] items-center justify-center">
        <svg viewBox="0 0 16 16" className="size-4" fill="#484848" stroke="#e8e8e8" strokeWidth="1.800" aria-hidden="true">
          <circle cx="7" cy="7" r="5.500" />
          <path d="M11 11l4 4" />
        </svg>
      </button>
      <button type="button" aria-label="Vista de tareas" className="flex h-7 w-[30px] items-center justify-center">
        <svg viewBox="0 0 17 16" className="h-4 w-[17px]" aria-hidden="true">
          <path fill="#f3f3f3" d="M4 1h13v10H4z" />
          <path fill="#8a8a8a" fillOpacity="0.900" d="M0 5h12v10H0z" />
        </svg>
      </button>
      <button type="button" aria-label="TradingView" className="flex h-7 w-[30px] flex-col items-center justify-center gap-px rounded-[3px] bg-[#2b2b2b]">
        <span className="flex size-4 items-center justify-center rounded-[3px] bg-black">
          <TvLogo className="h-[7px] w-[13px] text-white" />
        </span>
        <span className="h-[2px] w-[10px] rounded-full bg-[#3ed0c8]" />
      </button>
    </div>
    <div className="flex items-center justify-end gap-[6px] pr-[14px]">
      <div className="text-right">
        <div>07:45 a. m.</div>
        <div>28/04/2026</div>
      </div>
      <svg viewBox="0 0 10 11" className="h-[11px] w-[9px]" fill="#e8e8e8" aria-hidden="true">
        <path d="M0 8.500h10L8.500 6V4c0-5-7-5-7 0v2zM3.500 9.500h3l-1.500 1.500z" />
        <path d="M4 3h3L4 6h3" fill="none" stroke="#202020" />
      </svg>
    </div>
  </div>
);

const App = () => (
  <div className="flex h-screen min-h-[720px] w-full min-w-[1240px] flex-col overflow-hidden bg-[#2e2e2e] font-['Open_Sans','Noto_Sans',sans-serif] text-[#d6d6d6]">
    <TitleBar />
    <TopToolbar />
    <div className="flex min-h-0 flex-1">
      <LeftToolbar />
      <main className="ml-[3px] flex min-w-0 flex-1 flex-col pt-[2px]">
        <div className="flex min-h-0 flex-1">
          <MainChart />
          <PriceScale />
          <div className="w-[3px] shrink-0 bg-[#2e2e2e]" />
          <SideChart />
        </div>
        <BottomBar />
      </main>
      <div className="w-[2px] shrink-0" />
      <RightSidebar />
    </div>
    <Taskbar />
  </div>
);

export default App;
